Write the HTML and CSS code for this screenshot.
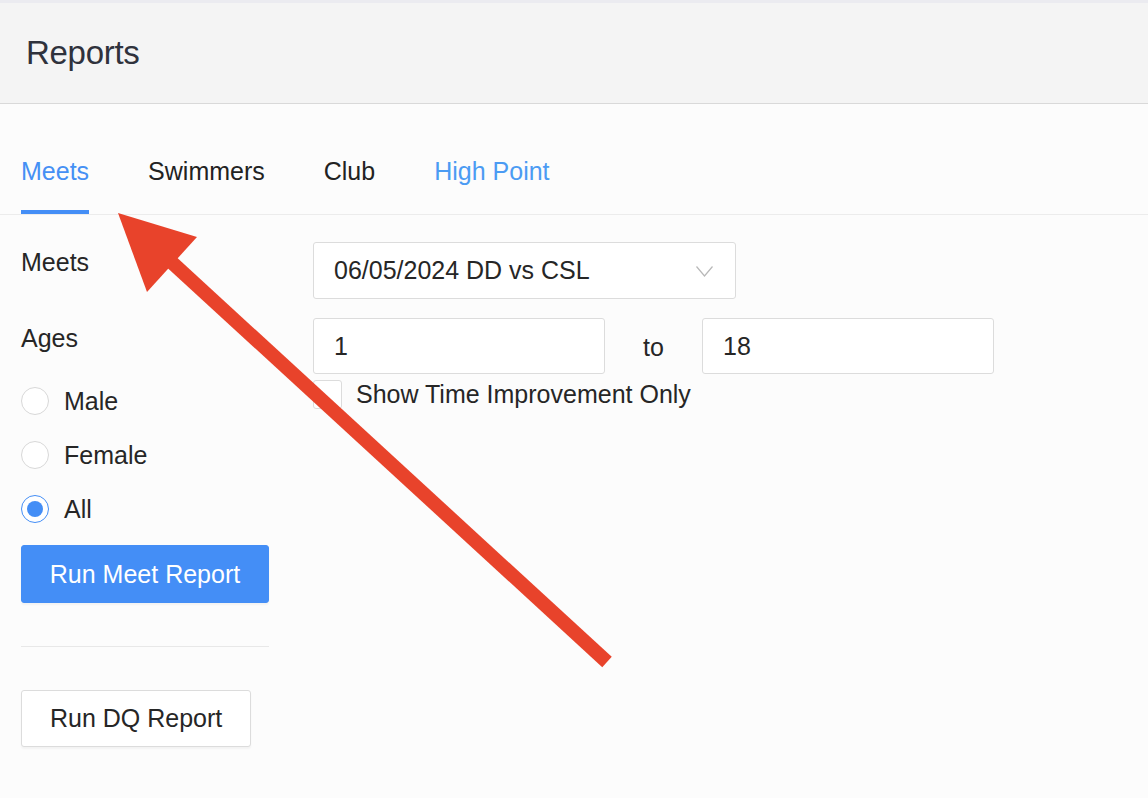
FILE: index.html
```html
<html>
<head>
<link rel="stylesheet" href="styles.css">
</head>
<body>
<div class="topbar"></div>
<header class="page-header">
	<h1>Reports</h1>
</header>

<nav class="tabs">
	<a class="tab active">Meets</a>
	<a class="tab">Swimmers</a>
	<a class="tab">Club</a>
	<a class="tab link">High Point</a>
</nav>

<form class="report-form">
	<div class="side">
		<label class="field-label">Meets</label>
		<label class="field-label ages">Ages</label>
		<div class="radios">
			<label class="radio"><span class="circle"></span>Male</label>
			<label class="radio"><span class="circle"></span>Female</label>
			<label class="radio"><span class="circle checked"></span>All</label>
		</div>
		<button type="button" class="btn primary">Run Meet Report</button>
		<hr class="divider">
		<button type="button" class="btn dq">Run DQ Report</button>
	</div>

	<div class="fields">
		<div class="select">
			<span>06/05/2024 DD vs CSL</span>
			<svg class="chevron" width="17" height="11" viewBox="0 0 17 11"><polyline points="0.5,0.5 8.5,10 16.5,0.5" fill="none" stroke="#b8b8b8" stroke-width="1.2"/></svg>
		</div>
		<div class="range">
			<div class="input">1</div>
			<span class="to">to</span>
			<div class="input">18</div>
		</div>
		<label class="check"><span class="box"></span>Show Time Improvement Only</label>
	</div>
</form>

<svg class="arrow" width="1148" height="798" viewBox="0 0 1148 798">
	<line x1="166" y1="257" x2="607" y2="662" stroke="#e8432b" stroke-width="14"/>
	<polygon points="118,213 197,237 147,292" fill="#e8432b"/>
</svg>
</body>
</html>
```

FILE: styles.css
```css
body{
	margin:0;
	background-color:#fcfcfc;
	font-family:"Liberation Sans", Arial, sans-serif;
	font-size:25px;
	color:#262626;
	position:relative;
	height:798px;
	overflow:hidden;
}

.topbar{
	height:3px;
	background-color:#ebebf0;
}

.page-header{
	height:100px;
	background-color:#f4f4f4;
	border-bottom:1px solid #d9d9d9;
	display:flex;
	align-items:center;
	padding-left:26px;
}
.page-header h1{
	margin:0;
	font-size:33px;
	font-weight:normal;
	color:#2f323c;
	letter-spacing:-0.3px;
}

.tabs{
	display:flex;
	gap:59px;
	padding:0 21px;
	border-bottom:1px solid #ececec;
}
.tab{
	padding-top:52px;
	padding-bottom:24px;
	line-height:30px;
	border-bottom:4px solid transparent;
	color:#222;
}
.tab.active{
	color:#4590f4;
	border-bottom-color:#448ef6;
}
.tab.link{
	color:#4b9bf3;
}

.report-form{
	display:flex;
	gap:44px;
	padding:27px 21px 0;
	margin:0;
}

.side{
	width:248px;
	display:flex;
	flex-direction:column;
	align-items:flex-start;
}
.field-label{
	display:block;
	line-height:30px;
	margin-top:5px;
}
.field-label.ages{
	margin-top:46px;
}
.radios{
	display:flex;
	flex-direction:column;
	gap:26px;
	margin-top:34px;
}
.radio{
	display:flex;
	align-items:center;
	gap:15px;
	height:28px;
}
.circle{
	width:26px;
	height:26px;
	border:1px solid #d8d8d8;
	border-radius:50%;
	background-color:#fff;
	display:flex;
	align-items:center;
	justify-content:center;
}
.circle.checked{
	border-color:#448ef6;
}
.circle.checked::after{
	content:"";
	width:16px;
	height:16px;
	border-radius:50%;
	background-color:#448ef6;
}

.btn{
	font-family:inherit;
	font-size:25px;
	height:57px;
	padding:0 28px;
	border:1px solid #dcdcdc;
	border-radius:3px;
	background-color:#fff;
	color:#262626;
	white-space:nowrap;
	box-shadow:0 2px 2px rgba(0,0,0,0.04);
}
.btn.primary{
	width:248px;
	height:58px;
	padding:0;
	margin-top:22px;
	background-color:#448ef6;
	border-color:#448ef6;
	color:#fff;
}
.divider{
	width:248px;
	border:0;
	border-top:1px solid #e8e8e8;
	margin:43px 0 43px;
}

.fields{
	display:flex;
	flex-direction:column;
	align-items:flex-start;
}
.select{
	width:379px;
	height:55px;
	border:1px solid #dcdcdc;
	border-radius:3px;
	background-color:#fff;
	display:flex;
	align-items:center;
	justify-content:space-between;
	padding:0 22px 0 20px;
}
.chevron{
	margin-top:2px;
}
.range{
	display:flex;
	align-items:center;
	margin-top:19px;
}
.input{
	width:270px;
	height:54px;
	border:1px solid #dcdcdc;
	border-radius:3px;
	background-color:#fff;
	padding-left:20px;
	display:flex;
	align-items:center;
}
.to{
	width:97px;
	text-align:center;
	padding-top:2px;
}
.check{
	display:flex;
	align-items:center;
	gap:14px;
	margin-top:5px;
	line-height:31px;
}
.box{
	width:27px;
	height:27px;
	border:1px solid #dcdcdc;
	border-radius:3px;
	background-color:#fff;
}

.arrow{
	position:absolute;
	top:0;
	left:0;
	pointer-events:none;
}
```
